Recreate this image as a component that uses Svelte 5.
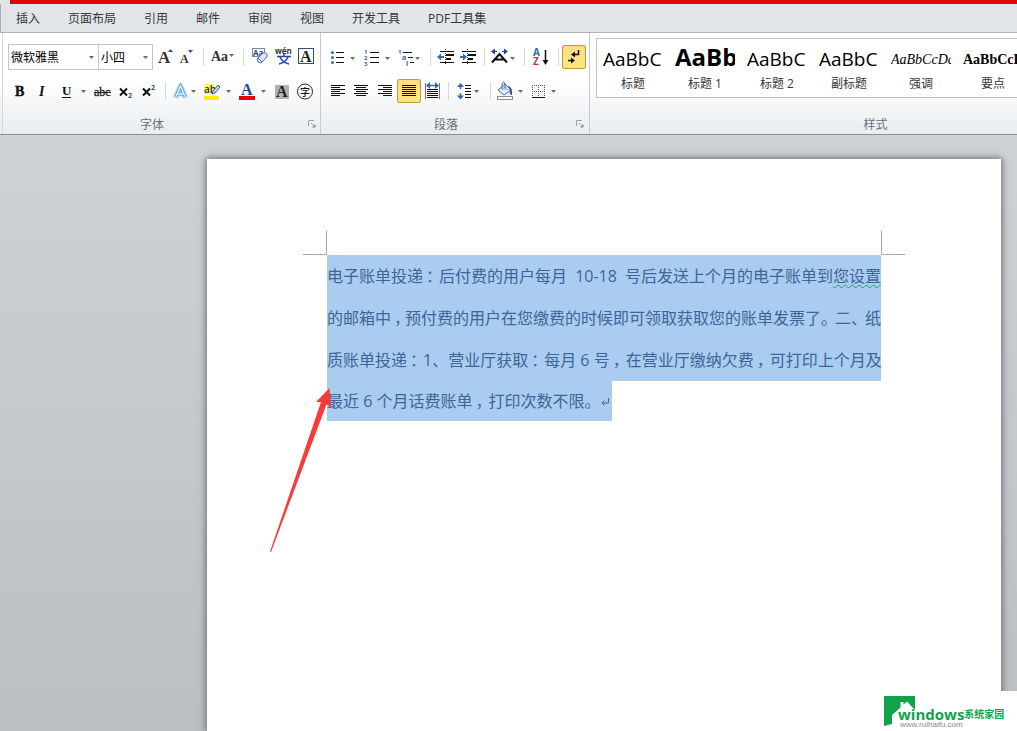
<script>
  const tabs = ['插入', '页面布局', '引用', '邮件', '审阅', '视图', '开发工具', 'PDF工具集'];

  const serif = 'font-family="Liberation Serif, serif"';
  const sans = 'font-family="Open Sans, sans-serif"';
  const arrow = (x, y = 11) => `<path d="M${x} ${y}h5l-2.5 3z" fill="#666b74"/>`;
  const lines = (rows) =>
    `<path d="${rows.map(([x, y, w]) => `M${x} ${y}.5h${w}`).join('')}" stroke="#111" stroke-width="1" fill="none"/>`;
  const dots = [7, 12, 17].map((y) => `<circle cx="4.5" cy="${y + 0.5}" r="1.5" fill="#3c6ab0"/>`).join('');
  const vArrows = `<path d="M8.500 5v5M8.500 14v5" stroke="#3467b4" stroke-width="1.500"/><path d="M5 8l3.500-4 3.500 4zM5 16.500l3.500 4 3.500-4z" fill="#3467b4"/>`;

  const icons = {
    grow: `<text x="2" y="18" ${serif} font-size="17" font-weight="700" fill="#333">A</text><path d="M12 7l2.500-3 2.500 3z" fill="#28539a"/>`,
    shrink: `<text x="4" y="18" ${serif} font-size="12" font-weight="700" fill="#333">A</text><path d="M12 5h5l-2.500 3z" fill="#28539a"/>`,
    changeCase: `<text x="3" y="16" ${serif} font-size="14" font-weight="700" fill="#333">Aa</text>${arrow(21, 9)}`,
    clear: `<rect x="4.500" y="3.500" width="12" height="8" fill="#fff" stroke="#7389b4"/><text x="5" y="11" ${sans} font-size="8" font-weight="700" fill="#26447c">Aa</text><path d="M9 14l6-6q3-1 4 1v3l-6 6q-4 0-4-4z" fill="#dce5f8" stroke="#5671b2"/><path d="M10 13l4 4" stroke="#5671b2"/>`,
    phonetic: `<text x="3" y="9" ${sans} font-size="8" font-weight="700" fill="#333">wén</text><path d="M5 11.500h14M12 9v2M8 12q2 5 9 7M16 12q-2 5-9 7" stroke="#2545b2" stroke-width="1.500" fill="none"/>`,
    frame: `<rect x="2.500" y="3.500" width="15" height="15" fill="#fff" stroke="#345078"/><text x="4" y="16.500" ${serif} font-size="16" font-weight="700" fill="#222">A</text>`,
    bold: `<text x="7" y="17" ${serif} font-size="14" font-weight="700" fill="#111" stroke="#111" stroke-width=".4">B</text>`,
    italic: `<text x="7" y="17" ${serif} font-size="14" font-style="italic" font-weight="700" fill="#111">I</text>`,
    underline: `<text x="6" y="16" ${serif} font-size="13" font-weight="700" fill="#111">U</text><path d="M6 18.500h9" stroke="#111"/>${arrow(25)}`,
    strike: `<text x="4" y="17" ${serif} font-size="12" fill="#222" stroke="#222" stroke-width=".3">abc</text><path d="M4 13.500h17" stroke="#222"/>`,
    sub: `<path d="M6 9.500l7 7M13 9.500l-7 7" stroke="#111" stroke-width="2"/><text x="14" y="19" ${sans} font-size="7" font-weight="700" fill="#2d50a0">2</text>`,
    sup: `<path d="M5 9.500l7 7M12 9.500l-7 7" stroke="#111" stroke-width="2"/><text x="13" y="11" ${sans} font-size="7" font-weight="700" fill="#2d50a0">2</text>`,
    effect: `<path d="M5.500 18.500L10.500 7l5 11.500M7.500 15h6" fill="none" stroke="#a9d2f0" stroke-width="5" stroke-linejoin="round"/><path d="M5.500 18.500L10.500 7l5 11.500M7.500 15h6" fill="none" stroke="#5a9fd0" stroke-width="3"/><path d="M5.500 18.500L10.500 7l5 11.500M7.500 15h6" fill="none" stroke="#e6f4fd" stroke-width="1.400"/>${arrow(21)}`,
    highlight: `<rect x="4" y="5" width="10" height="10" fill="#fff27a"/><text x="4" y="14" ${sans} font-size="10" font-weight="600" fill="#333">ab</text><path d="M12 15l1-3 5-6 2 2-5 6z" fill="#c9d7ef" stroke="#34549a"/><rect x="4" y="17" width="15" height="4" fill="#fff000"/>${arrow(26)}`,
    color: `<text x="6" y="16" ${serif} font-size="16" font-weight="700" fill="#234a8c">A</text><rect x="4" y="17" width="16" height="4" fill="#e80000"/>${arrow(26)}`,
    shade: `<rect x="5" y="6" width="14" height="14" fill="#b2b2b2"/><text x="6" y="18" ${serif} font-size="16" font-weight="700" fill="#222">A</text>`,
    enclose: `<circle cx="11" cy="12.500" r="7.500" fill="#fff" stroke="#222"/><text x="6" y="17" font-family="Noto Sans CJK SC, sans-serif" font-size="10" font-weight="500" fill="#111">字</text>`,
    bullets: `${dots}${lines([[8, 7, 8], [8, 12, 8], [8, 17, 8]])}${arrow(22, 12)}`,
    numbers: `${[['1', 9], ['2', 15], ['3', 21]].map(([t, y]) => `<text x="5" y="${y}" ${sans} font-size="6" font-weight="700" fill="#3b65a8">${t}</text>`).join('')}${lines([[11, 7, 9], [11, 12, 9], [11, 17, 9]])}${arrow(26, 12)}`,
    multi: `<text x="3" y="9" ${sans} font-size="6" font-weight="700" fill="#3b65a8">1</text><text x="7" y="15" ${sans} font-size="7" font-weight="700" fill="#3b65a8">a</text><text x="11" y="21" ${sans} font-size="7" font-weight="700" fill="#3b65a8">i</text>${lines([[8, 7, 9], [13, 12, 5], [15, 17, 4]])}${arrow(20, 12)}`,
    outdent: `${lines([[6, 6, 14], [12, 9, 8], [12, 10, 8], [12, 13, 5], [12, 14, 5], [6, 17, 14]])}<path d="M11.500 4v16" stroke="#333" stroke-dasharray="1 1"/><path d="M3 12l4-3.500v2.500h3v2H7v2.500z" fill="#3467b4"/>`,
    indent: `${lines([[4, 6, 14], [10, 9, 8], [10, 10, 8], [10, 13, 5], [10, 14, 5], [4, 17, 14]])}<path d="M9.500 4v16" stroke="#333" stroke-dasharray="1 1"/><path d="M9 12L5 8.500v2.500H2v2h3v2.500z" fill="#3467b4"/>`,
    scale: `<path d="M4 17.500L11.500 9l7.500 8.500M7 14.500h9" fill="none" stroke="#111" stroke-width="2"/><path d="M6 6.500h3M14 6.500h3" stroke="#243f9c"/><path d="M3 6.500l4-3v6zM20 6.500l-4-3v6z" fill="#243f9c"/>${arrow(22, 12)}`,
    sort: `<text x="5" y="11" ${sans} font-size="10" font-weight="700" fill="#3265ae">A</text><text x="5" y="20" ${sans} font-size="10" font-weight="700" fill="#b13a3e">Z</text><path d="M17.500 5v12" stroke="#111" stroke-width="1.500"/><path d="M14.500 15h6l-3 5z" fill="#111"/>`,
    marks: `<path d="M16.500 5v4.500H11M6 15.500h5" stroke="#111" stroke-width="1.500" fill="none"/><path d="M9 9.500l4-3v6zM13 15.500l-4-3v6z" fill="#111"/>`,
    left: lines([[3, 6, 14], [3, 8, 9], [3, 10, 14], [3, 12, 9], [3, 14, 14], [3, 16, 9]]),
    center: lines([[4, 6, 14], [6, 8, 10], [4, 10, 14], [6, 12, 10], [4, 14, 14], [6, 16, 10]]),
    right: lines([[4, 6, 14], [9, 8, 9], [4, 10, 14], [9, 12, 9], [4, 14, 14], [9, 16, 9]]),
    justify: lines([[5, 6, 14], [5, 8, 14], [5, 10, 14], [5, 12, 14], [5, 14, 14], [5, 16, 14]]),
    distribute: `${lines([[6, 10, 11], [6, 12, 11], [6, 14, 11], [6, 16, 11], [6, 18, 11]])}<path d="M4.500 4v16M18.500 4v16" stroke="#777"/><path d="M8 6.500h7" stroke="#3467b4" stroke-width="1.500"/><path d="M5 6.500l4-3.500v7zM18 6.500L14 3v7z" fill="#3467b4"/>`,
    spacing: `${vArrows}${lines([[13, 6, 6], [13, 9, 6], [13, 12, 6], [13, 15, 6], [13, 18, 6]])}${arrow(22)}`,
    fill: `<path d="M4 11l7-6 6 6-7 5z" fill="#e6edf8" stroke="#42659f"/><path d="M6 11l5-4 4 4z" fill="#a9c2e8"/><path d="M8 10V5q2-4 3 0v4" fill="none" stroke="#42659f"/><path d="M14 7q5 1 4 9-3 0-2-4z" fill="#3159a8"/><rect x="3.500" y="17.500" width="15" height="3" fill="#fff" stroke="#8b8f94"/>${arrow(24)}`,
    borders: `<path d="M4 6.500h13M4 12.500h13M4.500 6v12M10.500 6v12M16.500 6v12" stroke="#555" stroke-dasharray="1 1"/><path d="M4 18.500h13" stroke="#111"/>${arrow(23)}`
  };

  const sep = (w = 8) => ({ sep: true, w });
  const tool = (icon, w, label, on = false) => ({ icon, w, label, on });

  const fontTop = [
    tool('grow', 20, '增大字体'), tool('shrink', 22, '缩小字体'), sep(10),
    tool('changeCase', 30, '更改大小写'), sep(10),
    tool('clear', 24, '清除格式'), tool('phonetic', 24, '拼音指南'), tool('frame', 22, '字符边框')
  ];
  const fontBottom = [
    tool('bold', 24, '加粗'), tool('italic', 24, '倾斜'), tool('underline', 34, '下划线'),
    tool('strike', 24, '删除线'), tool('sub', 24, '下标'), tool('sup', 22, '上标'), sep(10),
    tool('effect', 30, '文本效果'), tool('highlight', 35, '突出显示'), tool('color', 35, '字体颜色'),
    tool('shade', 24, '字符底纹'), tool('enclose', 22, '带圈字符')
  ];
  const paraTop = [
    tool('bullets', 31, '项目符号'), tool('numbers', 36, '编号'), tool('multi', 31, '多级列表'), sep(),
    tool('outdent', 24, '减少缩进量'), tool('indent', 22, '增加缩进量'), sep(),
    tool('scale', 32, '中文版式'), sep(), tool('sort', 26, '排序'), sep(),
    tool('marks', 24, '显示编辑标记', true)
  ];
  const paraBottom = [
    tool('left', 22, '左对齐'), tool('center', 24, '居中'), tool('right', 23, '右对齐'),
    tool('justify', 24, '两端对齐', true), tool('distribute', 23, '分散对齐'), sep(),
    tool('spacing', 34, '行距'), sep(), tool('fill', 34, '底纹'), tool('borders', 32, '边框')
  ];

  const styles = [
    ['AaBbC', '标题', ''],
    ['AaBb', '标题 1', 'heavy'],
    ['AaBbC', '标题 2', ''],
    ['AaBbC', '副标题', ''],
    ['AaBbCcDd', '强调', 'emphasis'],
    ['AaBbCcDd', '要点', 'strong']
  ];

  const split = (text) => text.split(/([：，。、])/).filter(Boolean);
  const line2 = split('的邮箱中，预付费的用户在您缴费的时候即可领取获取您的账单发票了。二、纸');
  const line3 = split('质账单投递：1、营业厅获取：每月 6 号，在营业厅缴纳欠费，可打印上个月及');
  const line4 = split('最近 6 个月话费账单，打印次数不限。');
</script>

{#snippet toolRow(items)}
  {#each items as t}
    {#if t.sep}
      <span class="sep" style:width="{t.w}px"></span>
    {:else}
      <button class="tool" class:on={t.on} aria-label={t.label} aria-pressed={t.on}>
        <svg width={t.w} height="24" viewBox="0 0 {t.w} 24">{@html icons[t.icon]}</svg>
      </button>
    {/if}
  {/each}
{/snippet}

{#snippet launcher(label)}
  <button class="launcher" aria-label={label}>
    <svg width="8" height="8" viewBox="0 0 8 8">
      <path d="M.5 6V.5H6M3 3l3 3" fill="none" stroke="#9aa0a8" />
      <path d="M7.500 4v3.500H4z" fill="#8a9099" />
    </svg>
  </button>
{/snippet}

{#snippet pieces(parts)}
  {#each parts as p}{#if /[：，]/.test(p)}<span class="punct mid">{p}</span>{:else if /[。、]/.test(p)}<span class="punct">{p}</span>{:else}{p}{/if}{/each}
{/snippet}

<div class="app">
  <div class="titlebar"></div>
  <nav class="tabs">
    {#each tabs as t}<button>{t}</button>{/each}
  </nav>

  <header class="ribbon">
    <section class="group">
      <div class="rows">
        <div class="row">
          <label class="combo font">
            <select aria-label="字体"><option>微软雅黑</option></select>
            <svg width="5" height="3" viewBox="0 0 5 3"><path d="M0 0h5L2.500 3z" fill="#666b74" /></svg>
          </label>
          <label class="combo size">
            <select aria-label="字号"><option>小四</option></select>
            <svg width="5" height="3" viewBox="0 0 5 3"><path d="M0 0h5L2.500 3z" fill="#666b74" /></svg>
          </label>
          {@render toolRow(fontTop)}
        </div>
        <div class="row">{@render toolRow(fontBottom)}</div>
      </div>
      <footer><span>字体</span>{@render launcher('字体设置')}</footer>
    </section>

    <section class="group">
      <div class="rows">
        <div class="row">{@render toolRow(paraTop)}</div>
        <div class="row">{@render toolRow(paraBottom)}</div>
      </div>
      <footer><span>段落</span>{@render launcher('段落设置')}</footer>
    </section>

    <section class="group gallery-group">
      <div class="gallery">
        {#each styles as [sample, name, kind]}
          <button class="style">
            <span class="sample {kind}">{sample}</span>
            <span class="name">{name}</span>
          </button>
        {/each}
      </div>
      <footer><span>样式</span></footer>
    </section>
  </header>

  <main class="workspace">
    <article class="page">
      <div class="crops"><i class="crop left"></i><i class="crop right"></i></div>
      <div class="body">
        <p class="line spread">
          <span>电子账单投递<span class="punct mid">：</span>后付费的用户每月</span>
          <span>10-18</span>
          <span>号后发送上个月的电子账单到<span class="checked">您设置</span></span>
        </p>
        <p class="line tight">{@render pieces(line2)}</p>
        <p class="line">{@render pieces(line3)}</p>
        <p class="line last">{@render pieces(line4)}<svg class="return" width="12" height="10" viewBox="0 0 12 10"><path d="M8.500 1v5H2M4.500 3.500L2 6l2.500 2.500" fill="none" stroke="#3d6596" /></svg></p>
      </div>
    </article>

    <svg class="pointer" width="62" height="166" viewBox="0 0 62 166">
      <path d="M60.500 0L47 14l5 0L1 163.500l1 .5L57.500 16.500l4.500 2.500z" fill="#f83a3a" />
    </svg>
  </main>

  <aside class="brand">
    <svg width="31" height="30" viewBox="0 0 31 30">
      <path d="M0 0h31v14l-8-8.500-3.500 3V6h-3v5.500L8 19v9L0 30z" fill="#12a24b" />
    </svg>
    <div class="brand-text">
      <div class="brand-name">windows<span>系统家园</span></div>
      <div class="brand-url">www.ruihaifu.com</div>
    </div>
  </aside>
</div>

<style>
  :global(body) { margin: 0; }
  :global(*) { box-sizing: border-box; }

  .app {
    position: relative;
    display: flex;
    flex-direction: column;
    min-height: 100vh;
    overflow: hidden;
    background: #e1e5e8;
    font-family: "Open Sans", "Noto Sans CJK SC", sans-serif;
    font-size: 12px;
    color: #33373d;
  }
  button, select {
    appearance: none;
    border: 0;
    margin: 0;
    padding: 0;
    background: none;
    font: inherit;
    color: inherit;
  }
  svg { display: block; flex: none; }

  .titlebar { height: 4px; margin-left: 10px; background: #e00404; }

  .tabs {
    display: flex;
    gap: 28px;
    height: 29px;
    padding: 0 15px;
    border-bottom: 1px solid #b0b4b9;
    border-left: 1px solid #a8adb3;
  }
  .tabs button { height: 28px; white-space: nowrap; }

  .ribbon {
    display: flex;
    height: 102px;
    padding-left: 2px;
    border-bottom: 1px solid #8b9097;
    background: linear-gradient(#fff 0%, #fff 45%, #e9ecf0 100%);
  }
  .group {
    display: flex;
    flex-direction: column;
    flex: none;
    justify-content: space-between;
    padding: 12px 3px 0 7px;
    border-right: 1px solid #c6cacf;
  }
  .group:first-child { border-left: 1px solid #d4d7db; padding: 12px 2px 0 5px; }
  .rows { display: flex; flex-direction: column; gap: 10px; }
  .row { display: flex; align-items: center; height: 24px; }

  .combo {
    display: flex;
    align-items: center;
    height: 26px;
    padding-right: 4px;
    border: 1px solid #c3c7cc;
    background: #fff;
  }
  .combo select { flex: 1; min-width: 0; height: 24px; padding-left: 2px; color: #000; }
  .combo.font { width: 91px; }
  .combo.size { width: 55px; margin: 0 3px 0 -1px; }

  .tool { display: block; height: 24px; }
  .tool.on {
    border-radius: 3px;
    background: linear-gradient(#fbdc87, #ffe877);
    box-shadow: inset 0 0 0 1px #c29a3f;
  }
  .sep { display: flex; justify-content: center; }
  .sep::before { content: ""; width: 1px; height: 18px; background: #d3d6db; }

  footer {
    display: flex;
    align-items: center;
    height: 21px;
    color: #667080;
  }
  footer span { flex: 1; padding-right: 2px; text-align: center; }
  .launcher { padding: 0 2px 0 10px; }

  .gallery-group { min-width: 568px; padding: 5px 0 0 6px; }
  .gallery {
    display: flex;
    height: 60px;
    border: 1px solid #bfc3c8;
    background: #fff;
  }
  .style { width: 72px; flex: none; padding: 0 6px; display: flex; flex-direction: column; }
  .sample {
    height: 36px;
    line-height: 41px;
    width: 60px;
    overflow: hidden;
    white-space: nowrap;
    text-align: left;
    color: #000;
    font-size: 19px;
  }
  .sample.heavy { font-size: 24px; font-weight: 700; line-height: 36px; }
  .sample.emphasis { font: italic 14px/42px "Liberation Serif", serif; }
  .sample.strong { font: bold 14px/42px "Liberation Serif", serif; }
  .name { width: 60px; text-align: center; line-height: 18px; }

  .workspace {
    position: relative;
    flex: 1;
    display: flex;
    padding: 24px 16px 0 207px;
    background: linear-gradient(#ced1d6, #bbbec3);
  }
  .page {
    flex: 1;
    min-width: 0;
    padding: 72px 96px 0;
    background: #fff;
    box-shadow: 0 0 7px 1px #66696e;
  }
  .crops { display: flex; justify-content: space-between; height: 24px; }
  .crop { width: 24px; border: 0 solid #a5a8ac; border-bottom-width: 1px; }
  .crop.left { border-right-width: 1px; }
  .crop.right { border-left-width: 1px; }
  .body {
    margin: 0 24px;
    font-size: 16px;
    line-height: 42px;
    color: #3d6596;
  }
  .line { height: 42px; margin: 0; background: #a9ccf0; white-space: nowrap; }
  .spread { display: flex; justify-content: space-between; }
  .last { width: fit-content; height: 40px; line-height: 40px; }
  .punct { display: inline-block; width: 16px; }
  .tight .punct { width: 14px; }
  .mid { padding-left: 3px; }
  .checked {
    text-decoration: underline wavy #1f9a6c 1px;
    text-underline-offset: 2px;
  }
  .return { display: inline-block; }

  .pointer { position: absolute; left: 269px; top: 253px; }

  .brand {
    position: absolute;
    right: 0;
    bottom: 0;
    display: flex;
    width: 136px;
    height: 40px;
    padding: 5px 0 0 3px;
    background: #fff;
  }
  .brand-text { margin: 11px 0 0 -17px; white-space: nowrap; }
  .brand-name {
    display: flex;
    align-items: center;
    height: 14px;
    font: bold 15px/14px "Open Sans", sans-serif;
    color: #12a24b;
  }
  .brand-name span { font: bold 10px/14px "Noto Sans CJK SC", sans-serif; }
  .brand-url { font: 8px/8px "Liberation Sans", sans-serif; color: #888; padding-left: 2px; }
</style>
